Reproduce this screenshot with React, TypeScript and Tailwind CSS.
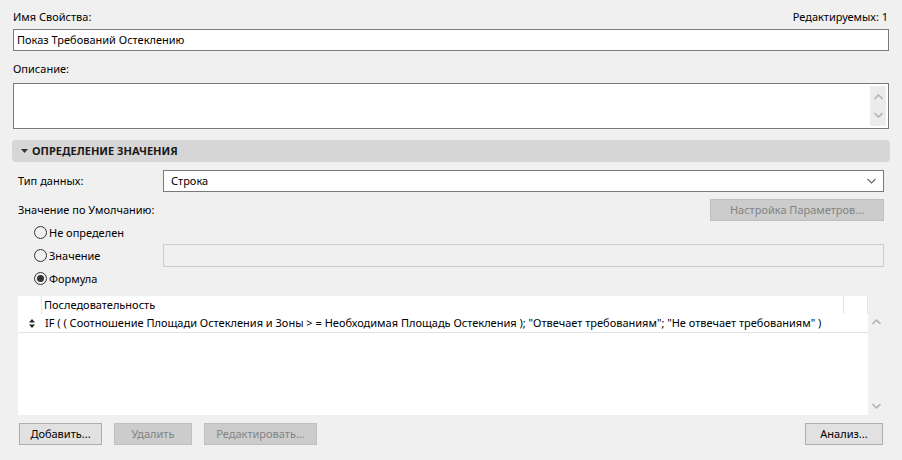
import React from "react";

const font = { fontFamily: '"Noto Sans", "Open Sans", sans-serif' };

function ChevronUp() {
  return (
    <svg width="9" height="6" viewBox="0 0 9 6" className="block">
      <path d="M0.5 5 L4.5 1 L8.5 5" fill="none" stroke="#b4b4b4" strokeWidth="1.6" />
    </svg>
  );
}

function ChevronDown({ color = "#b4b4b4", w = 1.6 }: { color?: string; w?: number }) {
  return (
    <svg width="9" height="6" viewBox="0 0 9 6" className="block">
      <path d="M0.5 1 L4.5 5 L8.5 1" fill="none" stroke={color} strokeWidth={w} />
    </svg>
  );
}

function Radio({ checked, label }: { checked?: boolean; label: string }) {
  return (
    <div className="flex items-center w-[145px]">
      <span className="ml-[34px] w-[13px] h-[13px] rounded-full border border-[#333333] bg-[#f0f0f0] flex items-center justify-center">
        {checked && <span className="w-[7px] h-[7px] rounded-full bg-[#333333]" />}
      </span>
      <span className="ml-[2px]">{label}</span>
    </div>
  );
}

function Btn({ label, disabled, w }: { label: string; disabled?: boolean; w: string }) {
  return (
    <div
      className={
        "h-[22px] flex items-center justify-center border " +
        w +
        (disabled
          ? " bg-[#cccccc] border-[#bfbfbf] text-[#838383]"
          : " bg-[#e1e1e1] border-[#adadad] text-black")
      }
    >
      {label}
    </div>
  );
}

export default function App() {
  return (
    <div
      className="w-[902px] h-[460px] bg-[#f0f0f0] text-[11px] leading-[16px] text-black overflow-hidden"
      style={font}
    >
      {/* name */}
      <div className="h-[29px] pt-[9px] px-[13px] flex justify-between">
        <span>Имя Свойства:</span>
        <span className="mr-[1px]">Редактируемых: 1</span>
      </div>
      <div className="mx-[13px] h-[22px] border border-[#7a7a7a] bg-white flex items-center px-[3px]">
        Показ Требований Остеклению
      </div>

      {/* description */}
      <div className="h-[32px] pt-[10px] px-[13px]">Описание:</div>
      <div className="mx-[13px] h-[46px] border border-[#7a7a7a] bg-white flex justify-end p-[1px]">
        <div className="w-[16px] mr-[1px] mt-[1px] mb-[1px] bg-[#ececec] flex flex-col items-center justify-between py-[8px]">
          <ChevronUp />
          <ChevronDown />
        </div>
      </div>

      {/* section header */}
      <div className="mt-[11px] ml-[12px] mr-[12px] h-[22px] rounded-[4px] bg-[#d6d6d6] flex items-center">
        <svg width="7" height="4" viewBox="0 0 7 4" className="ml-[9px]">
          <path d="M0 0 L7 0 L3.5 4 Z" fill="#333333" />
        </svg>
        <span className="ml-[4px] font-bold text-[#1a1a1a]">ОПРЕДЕЛЕНИЕ ЗНАЧЕНИЯ</span>
      </div>

      {/* data type */}
      <div className="mt-[8px] flex items-center pl-[18px] pr-[18px] h-[22px]">
        <span className="w-[145px]">Тип данных:</span>
        <div className="flex-1 h-[22px] border border-[#7a7a7a] bg-white flex items-center justify-between pl-[7px] pr-[7px]">
          <span>Строка</span>
          <ChevronDown color="#666666" w={1.1} />
        </div>
      </div>

      {/* default value */}
      <div className="mt-[7px] flex items-center justify-between pl-[18px] pr-[18px] h-[22px]">
        <span>Значение по Умолчанию:</span>
        <Btn label="Настройка Параметров..." disabled w="w-[174px]" />
      </div>

      <div className="h-[23px] flex items-center">
        <Radio label="Не определен" />
      </div>
      <div className="h-[23px] flex items-center pr-[18px]">
        <Radio label="Значение" />
        <div className="ml-[18px] flex-1 h-[23px] border border-[#cccccc] bg-[#f0f0f0]" />
      </div>
      <div className="h-[23px] flex items-center">
        <Radio checked label="Формула" />
      </div>

      {/* sequence table */}
      <div className="mt-[6px] ml-[18px] flex h-[119px]">
        <div className="w-[850px] bg-white flex flex-col">
          <div className="h-[18px] flex">
            <div className="w-[24px] border-r border-[#e5e5e5]" />
            <div className="flex-1 pl-[2px] flex items-center">Последовательность</div>
            <div className="w-[25px] border-l border-[#e5e5e5] border-r" />
          </div>
          <div className="h-[19px] flex items-center border-b border-[#e3e3e3]">
            <div className="w-[24px] flex justify-center pl-[3px]">
              <svg width="6" height="9" viewBox="0 0 6 9">
                <path d="M0 3.5 L3 0 L6 3.5 Z M0 5.5 L3 9 L6 5.5 Z" fill="#222222" />
              </svg>
            </div>
            <div className="pl-[3px] whitespace-nowrap">
              IF ( ( Соотношение Площади Остекления и Зоны &gt; = Необходимая Площадь Остекления ); "Отвечает требованиям"; "Не отвечает требованиям" )
            </div>
          </div>
        </div>
        <div className="w-[17px] flex flex-col items-center justify-between pt-[5px] pb-[6px] mt-[18px]">
          <ChevronUp />
          <ChevronDown />
        </div>
      </div>

      {/* buttons */}
      <div className="mt-[8px] flex items-center pl-[19px] pr-[19px]">
        <Btn label="Добавить..." w="w-[83px]" />
        <div className="ml-[12px]">
          <Btn label="Удалить" disabled w="w-[78px]" />
        </div>
        <div className="ml-[12px]">
          <Btn label="Редактировать..." disabled w="w-[113px]" />
        </div>
        <div className="flex-1" />
        <Btn label="Анализ..." w="w-[78px]" />
      </div>
    </div>
  );
}
